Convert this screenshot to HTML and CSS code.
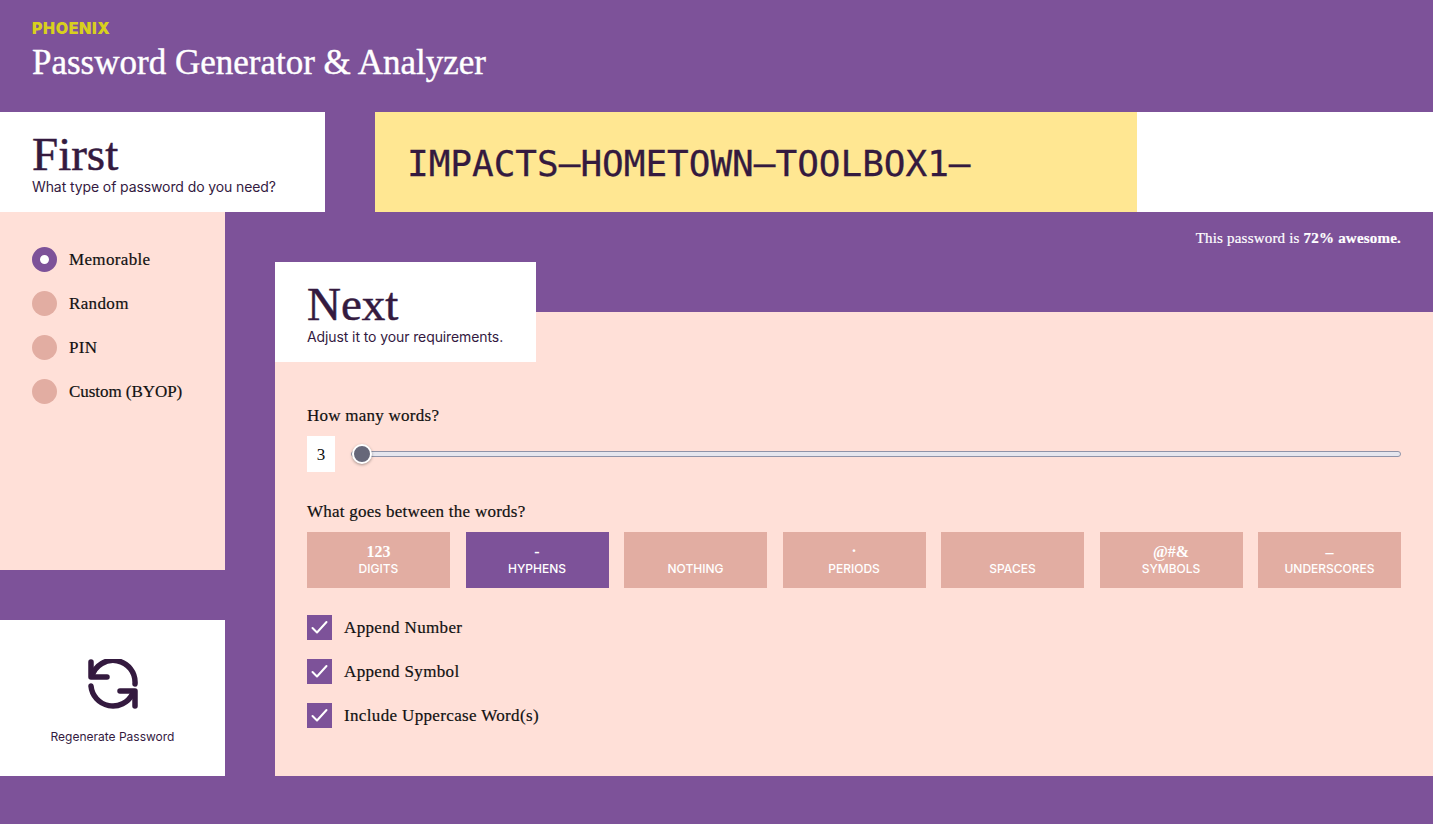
FILE: index.html
```html
<!DOCTYPE html>
<html lang="en">
<head>
    <meta charset="UTF-8">
    <meta name="viewport" content="width=device-width, initial-scale=1.0">
    <title>Password Generator &amp; Analyzer</title>
    <link rel="stylesheet" href="styles.css">
</head>
<body>

    <header class="site-header">
        <div class="brand">PHOENIX</div>
        <h1 class="site-title">Password Generator &amp; Analyzer</h1>
    </header>

    <div class="top-row">
        <div class="card-title card-first">
            <h2>First</h2>
            <p>What type of password do you need?</p>
        </div>
        <div class="password-box">
            <div class="password-text">IMPACTS–HOMETOWN–TOOLBOX1–</div>
        </div>
    </div>

    <div class="main-row">
        <aside class="side">
            <div class="type-panel">
                <div class="option"><span class="radio radio-on"></span>Memorable</div>
                <div class="option"><span class="radio"></span>Random</div>
                <div class="option"><span class="radio"></span>PIN</div>
                <div class="option"><span class="radio"></span><span class="option-tight">Custom (BYOP)</span></div>
            </div>
            <button class="regen">
                <svg class="regen-icon" viewBox="0 0 50 50" fill="none" stroke="currentColor" stroke-width="5.500" stroke-linecap="round" stroke-linejoin="round">
                    <path d="M3 3V18H19"/>
                    <path d="M4 17A22 22 0 0 1 47 25"/>
                    <path d="M3 27A22 22 0 0 0 44.500 35"/>
                    <path d="M32 32H47V47"/>
                </svg>
                <span>Regenerate Password</span>
            </button>
        </aside>

        <section class="content">
            <div class="score">This password is <b>72% awesome.</b></div>
            <div class="settings">
                <div class="card-title card-next">
                    <h2>Next</h2>
                    <p>Adjust it to your requirements.</p>
                </div>

                <div class="field-label words-label">How many words?</div>
                <div class="slider-row">
                    <div class="count">3</div>
                    <input class="slider" type="range" min="3" max="10" value="3">
                </div>

                <div class="field-label between-label">What goes between the words?</div>
                <div class="separators">
                    <button class="sep"><span class="sep-char">123</span><span>DIGITS</span></button>
                    <button class="sep sep-on"><span class="sep-char">-</span><span>HYPHENS</span></button>
                    <button class="sep"><span class="sep-char"></span><span>NOTHING</span></button>
                    <button class="sep"><span class="sep-char sep-raised">.</span><span>PERIODS</span></button>
                    <button class="sep"><span class="sep-char"></span><span>SPACES</span></button>
                    <button class="sep"><span class="sep-char">@#&amp;</span><span>SYMBOLS</span></button>
                    <button class="sep"><span class="sep-char sep-raised">_</span><span>UNDERSCORES</span></button>
                </div>

                <div class="checks">
                    <div class="option">
                        <span class="check"><svg viewBox="0 0 25 25" fill="none" stroke="currentColor" stroke-width="2" stroke-linecap="round" stroke-linejoin="round"><path d="M5.500 13L10 17.500L19.500 7"/></svg></span>
                        Append Number
                    </div>
                    <div class="option">
                        <span class="check"><svg viewBox="0 0 25 25" fill="none" stroke="currentColor" stroke-width="2" stroke-linecap="round" stroke-linejoin="round"><path d="M5.500 13L10 17.500L19.500 7"/></svg></span>
                        Append Symbol
                    </div>
                    <div class="option">
                        <span class="check"><svg viewBox="0 0 25 25" fill="none" stroke="currentColor" stroke-width="2" stroke-linecap="round" stroke-linejoin="round"><path d="M5.500 13L10 17.500L19.500 7"/></svg></span>
                        Include Uppercase Word(s)
                    </div>
                </div>
            </div>
        </section>
    </div>

</body>
</html>
```

FILE: styles.css
```css
*{
    box-sizing: border-box;
}
body{
    margin: 0;
    height: 824px;
    overflow: hidden;
    background-color: #7d5299;
    color: #341a3f;
    font-family: "Liberation Serif", serif;
}
.site-header{
    height: 112px;
    padding: 20px 32px 0;
}
.brand{
    color: #d8d01d;
    font-family: Inter, sans-serif;
    font-weight: 900;
    font-size: 16px;
    line-height: 16px;
    letter-spacing: 0.6px;
}
.site-title{
    margin: 6px 0 0;
    color: #fff;
    font-weight: 400;
    font-size: 35px;
    line-height: 42px;
    -webkit-text-stroke: 0.4px #fff;
}
.top-row{
    display: flex;
    height: 100px;
}
.card-title{
    background-color: #fff;
    padding-left: 32px;
}
.card-title h2{
    margin: 0;
    font-weight: 400;
    font-size: 47px;
    line-height: 48px;
    -webkit-text-stroke: 0.5px #341a3f;
}
.card-title p{
    margin: 0;
    font-family: Inter, sans-serif;
    font-size: 14px;
    line-height: 18px;
    letter-spacing: -0.1px;
}
.card-first{
    width: 325px;
    padding-top: 18px;
}
.password-box{
    flex: 1;
    margin-left: 50px;
    background-color: #fff;
}
.password-text{
    width: 762px;
    height: 100px;
    padding-left: 32px;
    background-color: #ffe792;
    font-family: "DejaVu Sans Mono", monospace;
    font-size: 36px;
    line-height: 103px;
    -webkit-text-stroke: 0.3px #341a3f;
}
.main-row{
    display: flex;
    height: 564px;
}
.side{
    display: flex;
    flex-direction: column;
    width: 225px;
    height: 564px;
}
.type-panel{
    height: 358px;
    padding: 35px 0 0 32px;
    background-color: #ffe0d8;
}
.option{
    display: flex;
    align-items: center;
    gap: 12px;
    height: 25px;
    margin-bottom: 19px;
    color: #111;
    font-size: 17px;
    letter-spacing: 0.35px;
    -webkit-text-stroke: 0.2px #111;
}
.option-tight{
    letter-spacing: -0.05px;
}
.radio{
    width: 25px;
    height: 25px;
    border-radius: 50%;
    background-color: #e2ada2;
}
.radio-on{
    border: 8px solid #7d5299;
    background-color: #fff;
}
.regen{
    display: flex;
    flex-direction: column;
    align-items: center;
    height: 156px;
    margin-top: 50px;
    padding: 39px 0 0;
    border: 0;
    background-color: #fff;
    color: #341a3f;
    font-family: Inter, sans-serif;
    font-size: 12px;
}
.regen-icon{
    display: block;
    width: 50px;
    height: 50px;
    margin-bottom: 20px;
}
.content{
    flex: 1;
    margin-left: 50px;
}
.score{
    height: 50px;
    padding: 18px 32px 0 0;
    color: #fff;
    font-size: 15px;
    line-height: 16px;
    letter-spacing: 0.2px;
    text-align: right;
    -webkit-text-stroke: 0.2px #fff;
}
.settings{
    display: flow-root;
    height: 464px;
    margin-top: 50px;
    padding: 0 32px;
    background-color: #ffe0d8;
}
.card-next{
    width: 261px;
    height: 100px;
    margin: -50px 0 0 -32px;
    padding-top: 18px;
}
.field-label{
    color: #111;
    font-size: 17px;
    line-height: 20px;
    letter-spacing: 0.25px;
    -webkit-text-stroke: 0.2px #111;
}
.words-label{
    padding-top: 44px;
    height: 64px;
}
.slider-row{
    display: flex;
    align-items: center;
    gap: 16px;
    margin-top: 10px;
}
.count{
    width: 28px;
    height: 36px;
    background-color: #fff;
    color: #111;
    font-size: 17px;
    line-height: 38px;
    text-align: center;
}
.slider{
    flex: 1;
    height: 20px;
    margin: 0;
    background: transparent;
    appearance: none;
    -webkit-appearance: none;
}
.slider::-webkit-slider-runnable-track{
    height: 6px;
    border: 1px solid #8f93a8;
    border-radius: 3px;
    background-color: #e6e6ee;
}
.slider::-webkit-slider-thumb{
    -webkit-appearance: none;
    width: 20px;
    height: 20px;
    margin-top: -8px;
    border: 2px solid #fff;
    border-radius: 50%;
    background-color: #666779;
    box-shadow: 0 1px 3px rgba(0, 0, 0, 0.35);
}
.between-label{
    margin-top: 30px;
}
.separators{
    display: grid;
    grid-template-columns: repeat(7, 143px);
    justify-content: space-between;
    margin-top: 10px;
}
.sep{
    display: flex;
    flex-direction: column;
    align-items: center;
    height: 56px;
    padding: 10px 0 0;
    border: 0;
    background-color: #e2ada2;
    color: #fff;
    font-family: Inter, sans-serif;
    font-weight: 500;
    font-size: 12px;
    line-height: 15px;
}
.sep-on{
    background-color: #7d5299;
}
.sep-char{
    height: 19px;
    font-family: "Liberation Serif", serif;
    font-weight: 700;
    font-size: 16px;
    line-height: 19px;
}
.sep-raised{
    line-height: 9px;
}
.checks{
    margin-top: 27px;
}
.check{
    width: 25px;
    height: 25px;
    background-color: #7d5299;
    color: #fff;
}
.check svg{
    display: block;
}
```
